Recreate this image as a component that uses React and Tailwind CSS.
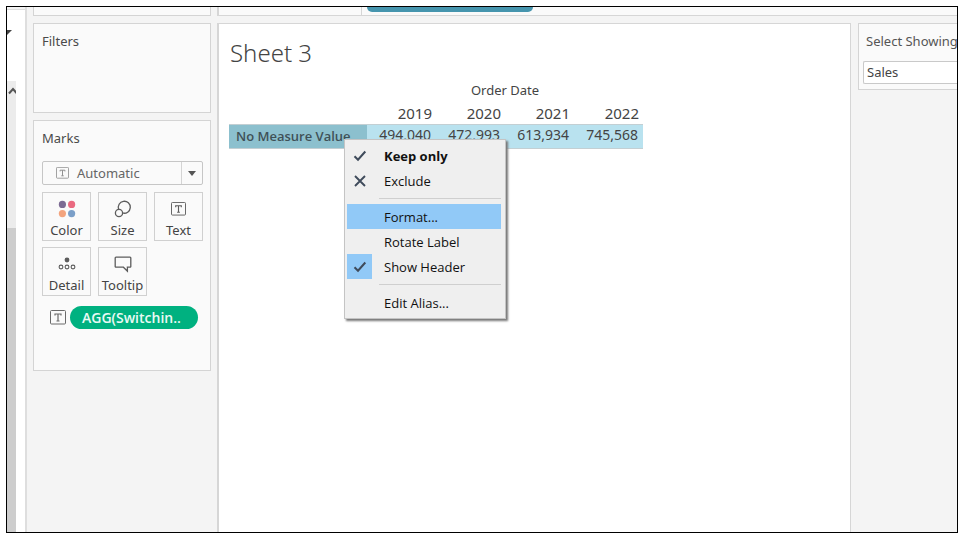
import React from "react";

const years = [
  ["2019", "494,040"],
  ["2020", "472,993"],
  ["2021", "613,934"],
  ["2022", "745,568"],
];

function TextIcon({ className }) {
  return (
    <svg viewBox="0 0 16 15" className={className} fill="none" stroke="currentColor" aria-hidden="true">
      <rect x="0.5" y="0.5" width="15" height="13.5" rx="1" />
      <path d="M5 5.5V4h6v1.5M8 4v7M6.5 11h3" strokeWidth="1.2" />
    </svg>
  );
}

function ColorIcon() {
  return (
    <svg viewBox="0 0 18 18" className="size-[18px]" aria-hidden="true">
      <circle cx="4.4" cy="4.4" r="3.6" fill="#7c6b93" />
      <circle cx="13.6" cy="4.4" r="3.6" fill="#ea6a80" />
      <circle cx="4.4" cy="13.6" r="3.6" fill="#f3a47e" />
      <circle cx="13.6" cy="13.6" r="3.6" fill="#7b9fc8" />
    </svg>
  );
}

function SizeIcon() {
  return (
    <svg viewBox="0 0 18 18" className="size-[18px]" fill="none" stroke="#5c5c5c" strokeWidth="1.3" aria-hidden="true">
      <path d="M4.700 9.400A6 6 0 1 1 8.600 13" />
      <circle cx="5" cy="13" r="3.600" />
    </svg>
  );
}

function DetailIcon() {
  return (
    <svg viewBox="0 0 18 18" className="size-[18px]" fill="none" stroke="#5c5c5c" strokeWidth="1.1" aria-hidden="true">
      <circle cx="9" cy="5" r="2.4" fill="#5c5c5c" stroke="none" />
      <circle cx="3" cy="12" r="1.9" />
      <circle cx="9" cy="12" r="1.9" />
      <circle cx="15" cy="12" r="1.9" />
    </svg>
  );
}

function TooltipIcon() {
  return (
    <svg viewBox="0 0 18 18" className="size-[18px]" fill="none" stroke="#5c5c5c" strokeWidth="1.3" aria-hidden="true">
      <path d="M2 2.2h14a.8.8 0 0 1 .8.8v8.4a.8.8 0 0 1-.8.8h-2.600v4l-4-4H2a.8.8 0 0 1-.8-.8V3a.8.8 0 0 1 .8-.8z" />
    </svg>
  );
}

function Check() {
  return (
    <svg viewBox="0 0 14 12" className="h-3 w-3.5" fill="none" stroke="#3f4b5b" strokeWidth="2" aria-hidden="true">
      <path d="M1.500 6.200l3.500 3.500L12.300 1.500" />
    </svg>
  );
}

function Cross() {
  return (
    <svg viewBox="0 0 12 12" className="size-3" fill="none" stroke="#3f4b5b" strokeWidth="1.900" aria-hidden="true">
      <path d="M1 1l10 10M11 1L1 11" />
    </svg>
  );
}

function MarkButton({ icon, label }) {
  return (
    <button className="flex h-[49px] flex-col items-center justify-between border border-[#d0d0d0] bg-[#fafafa] pb-px pt-[7px] text-[13px] leading-[18px] text-[#444]">
      {icon}
      <span>{label}</span>
    </button>
  );
}

function MenuItem({ icon, label, bold, active, checked }) {
  return (
    <button
      role="menuitem"
      className={`flex h-[25px] w-full items-center text-left ${active ? "bg-[#91c9f7]" : ""} ${bold ? "font-bold" : ""}`}
    >
      <span className={`flex h-full w-[25px] items-center justify-center ${checked ? "bg-[#91c9f7]" : ""}`}>{icon}</span>
      <span className="pl-3">{label}</span>
    </button>
  );
}

function Separator() {
  return (
    <div role="separator" className="py-[5px] pl-8">
      <div className="h-px bg-[#cfcfcf]" />
    </div>
  );
}

function ContextMenu() {
  return (
    <div
      role="menu"
      className="absolute left-[125px] top-[115px] w-[162px] border border-[#c4c4c4] bg-[#efefef] py-[3px] pl-0.5 pr-1 font-['Open_Sans',sans-serif] text-[13px] leading-[18px] text-[#111] shadow-[2px_2px_2px_#777]"
    >
      <MenuItem icon={<Check />} label="Keep only" bold />
      <MenuItem icon={<Cross />} label="Exclude" />
      <Separator />
      <MenuItem label="Format..." active />
      <MenuItem label="Rotate Label" />
      <MenuItem icon={<Check />} label="Show Header" checked />
      <Separator />
      <MenuItem label="Edit Alias..." />
    </div>
  );
}

function DataPane() {
  return (
    <aside className="flex w-5 shrink-0 flex-col border-r-2 border-[#dedede] bg-white">
      <div className="h-[3px] border-b border-[#dedede] bg-[#f4f4f4]" />
      <div className="flex h-[71px] items-start pt-5">
        <svg viewBox="0 0 5 5" className="size-[5px]" aria-hidden="true">
          <path d="M0 0h5L0 5z" fill="#444" />
        </svg>
      </div>
      <div className="flex w-[9px] grow flex-col bg-[#ececec]">
        <svg viewBox="0 0 9 18" className="h-[18px] w-[9px]" fill="none" stroke="#555" strokeWidth="2" aria-hidden="true">
          <path d="M2 12.500l4-4.500 4 4.500" />
        </svg>
        <div className="mt-[129px] grow bg-[#cdcdcd]" />
      </div>
    </aside>
  );
}

function Cards() {
  return (
    <section className="flex w-[190px] shrink-0 flex-col gap-[7px] px-1.5">
      <div className="h-[9px] border border-t-0 border-[#d4d4d4] bg-[#fafafa]" />
      <div className="h-[90px] border border-[#d4d4d4] bg-[#fafafa] pl-2 pr-[7px] pt-2">
        <h2 className="text-[13px] leading-[18px] text-[#4a4a4a]">Filters</h2>
      </div>
      <div className="h-[251px] border border-[#d4d4d4] bg-[#fafafa] pl-2 pr-[7px] pt-2">
        <h2 className="text-[13px] leading-[18px] text-[#4a4a4a]">Marks</h2>
        <button className="mt-3.5 flex h-6 w-full items-center rounded-[2px] border border-[#c6c6c6] text-[13px] text-[#666]">
          <TextIcon className="ml-[13px] h-3 w-[13px] text-[#8c8c8c]" />
          <span className="grow pl-2 pt-0.5 text-left">Automatic</span>
          <span className="flex h-full w-[21px] items-center justify-center border-l border-[#d4d4d4]">
            <svg viewBox="0 0 8 5" className="h-[5px] w-2" aria-hidden="true">
              <path d="M0 0h8L4 5z" fill="#555" />
            </svg>
          </span>
        </button>
        <div className="mt-[7px] grid grid-cols-3 gap-x-[7px] gap-y-1.5">
          <MarkButton icon={<ColorIcon />} label="Color" />
          <MarkButton icon={<SizeIcon />} label="Size" />
          <MarkButton icon={<TextIcon className="mt-0.5 h-[14px] w-[15px] text-[#5c5c5c]" />} label="Text" />
          <MarkButton icon={<DetailIcon />} label="Detail" />
          <MarkButton icon={<TooltipIcon />} label="Tooltip" />
        </div>
        <div className="mt-2.5 flex items-center gap-1 pl-2">
          <TextIcon className="h-[15px] w-4 text-[#6a6a6a]" />
          <button className="h-[23px] w-32 rounded-full bg-[#00b180] pl-3 text-left font-['Open_Sans',sans-serif] text-[14px] font-semibold leading-[20px] text-[#eafaf5]">
            AGG(Switchin..
          </button>
        </div>
      </div>
    </section>
  );
}

function Sheet() {
  return (
    <main className="relative grow border border-b-0 border-l-2 border-[#d6d6d6] bg-white pl-2.5 pt-[15px]">
      <h1 className="pl-px text-[24px] font-light leading-[28px] text-[#444]">Sheet 3</h1>
      <table className="mt-[14px] w-[414px] table-fixed border-collapse text-[15px] leading-[20px] text-[#444]">
        <thead>
          <tr className="h-[18px]">
            <td className="w-[138px]" />
            <th colSpan={4} className="p-0 text-center text-[13px] font-normal leading-[18px]">Order Date</th>
          </tr>
          <tr className="h-[25px]">
            <td />
            {years.map(([y]) => (
              <th key={y} scope="col" className="p-0 pr-1 pt-1 text-right font-normal">{y}</th>
            ))}
          </tr>
        </thead>
        <tbody>
          <tr className="h-6 border-y border-[#c3cfd3]">
            <th scope="row" className="bg-[#8cc0ce] p-0 pl-[7px] text-left font-['Open_Sans',sans-serif] text-[13px] font-semibold text-[#3f5157]">No Measure Value</th>
            {years.map(([y, v]) => (
              <td key={y} className="bg-[#b9e2ef] p-0 pb-0.5 pr-[5px] text-right text-[14px]">{v}</td>
            ))}
          </tr>
        </tbody>
      </table>
      <ContextMenu />
    </main>
  );
}

export default function App() {
  return (
    <div className="flex h-screen bg-white pb-[3px] pl-1.5 pr-[5px] pt-1.5 font-['Noto_Sans',sans-serif]">
      <div className="flex min-w-0 grow overflow-hidden border border-black bg-[#f4f4f4]">
        <DataPane />
        <Cards />
        <div className="flex min-w-0 grow flex-col gap-[7px]">
          <div className="flex h-[9px] shrink-0 border-b border-l-2 border-[#d6d6d6] bg-[#fafafa]">
            <div className="w-[143px] border-r border-[#d6d6d6]" />
            <div className="ml-[5px] h-[5px] w-[166px] rounded-b-xl bg-[#4695ae]" />
          </div>
          <div className="flex min-h-0 grow gap-[7px]">
            <Sheet />
            <aside className="w-[99px] shrink-0">
              <div className="h-[67px] overflow-hidden border border-r-0 border-[#d4d4d4] bg-[#fafafa] pl-1">
                <label htmlFor="measure" className="block whitespace-nowrap pl-[3px] pt-2 text-[13px] leading-[18px] text-[#555]">
                  Select Showing
                </label>
                <input
                  id="measure"
                  defaultValue="Sales"
                  className="mt-[11px] h-[23px] w-full rounded-l-[2px] border border-r-0 border-[#c9c9c9] bg-white pb-0.5 pl-[3px] text-[13px] text-[#444]"
                />
              </div>
            </aside>
          </div>
        </div>
      </div>
    </div>
  );
}
